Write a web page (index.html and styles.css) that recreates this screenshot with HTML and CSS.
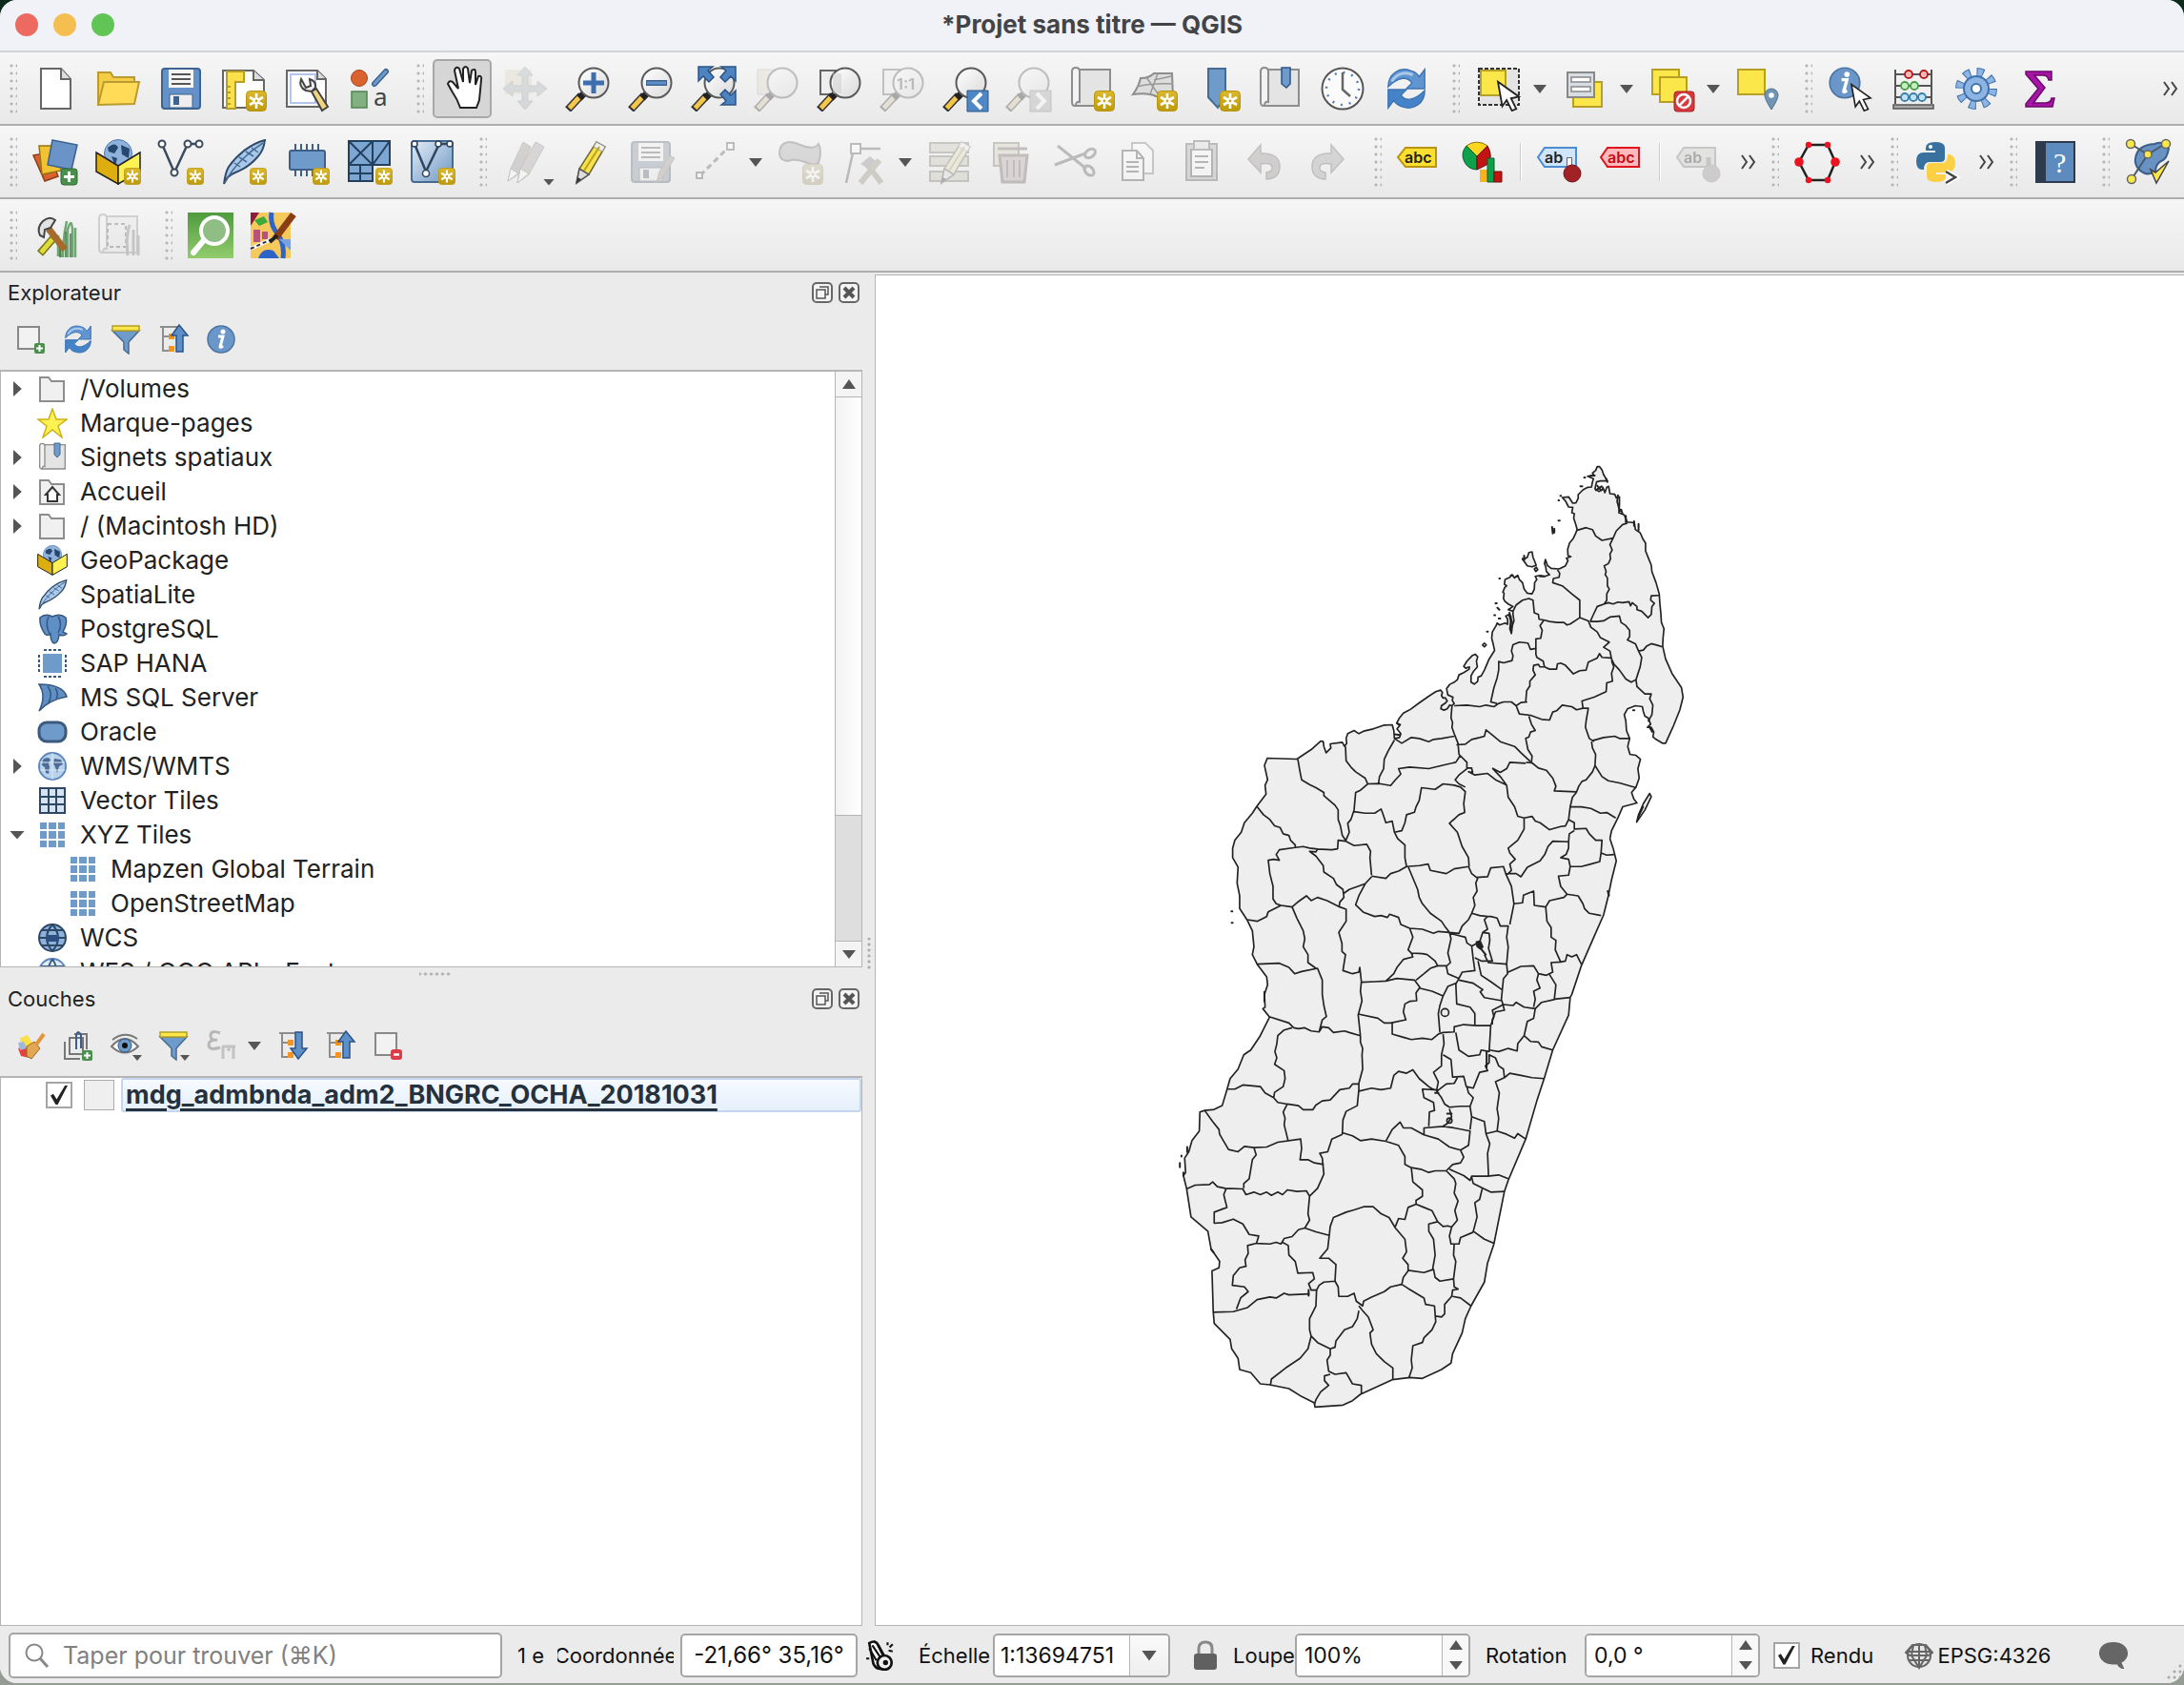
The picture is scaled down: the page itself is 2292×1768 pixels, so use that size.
FILE: index.html
```html
<!DOCTYPE html>
<html lang="fr">
<head>
<meta charset="utf-8">
<title>*Projet sans titre — QGIS</title>
<meta name="viewport" content="width=device-width, initial-scale=1">
<link rel="stylesheet" href="styles.css">
</head>
<body>
<svg class="defs" aria-hidden="true">
  <defs>
    <linearGradient id="gGold" x1="0" y1="0" x2="0" y2="1"><stop offset="0" stop-color="#dcb92c"/><stop offset="1" stop-color="#bd9a0b"/></linearGradient>
    <linearGradient id="gBlue" x1="0" y1="0" x2="1" y2="1"><stop offset="0" stop-color="#e3ecf6"/><stop offset="1" stop-color="#6d97c4"/></linearGradient>
    <linearGradient id="gGreen" x1="0" y1="0" x2="0" y2="1"><stop offset="0" stop-color="#4f9a3f"/><stop offset="1" stop-color="#92cc6c"/></linearGradient>
    <linearGradient id="gGlass" x1="0" y1="0" x2="1" y2="1"><stop offset="0" stop-color="#fff"/><stop offset="1" stop-color="#d9d9d9"/></linearGradient>
  </defs>
  <symbol id="badge" viewBox="0 0 22 22"><rect x=".5" y=".5" width="21" height="21" rx="4" fill="url(#gGold)" stroke="#b8950c"/><path d="M11 3v16M4 7l14 8M18 7L4 15" stroke="#fff" stroke-width="2.600"/><circle cx="11" cy="11" r="3.400" fill="#fff"/><circle cx="11" cy="11" r="1.400" fill="#c9a51a"/></symbol>
  <symbol id="mag" viewBox="0 0 48 48"><path d="M3 46L17 31" stroke="#333" stroke-width="8"/><path d="M4.500 44.500L15 33" stroke="#f4c64a" stroke-width="5"/><path d="M15 34l5-5" stroke="#222" stroke-width="7"/><circle cx="30" cy="18" r="15.500" fill="url(#gGlass)" stroke="#5a5a5a" stroke-width="2"/></symbol>
  <symbol id="refresh" viewBox="0 0 48 48"><path d="M4 22C4 8 16 0 28 4c5 1 8 4 10 7l6-8v21H24l6-6c-4-7-14-8-26 4z" fill="#5f96d2" stroke="#3f74b4" stroke-width="1.500"/><path d="M44 26c0 14-12 22-24 18-5-1-8-4-10-7l-6 8V25h20l-6 6c4 7 14 7 26-5z" fill="#4583c9" stroke="#3f74b4" stroke-width="1.500"/><path d="M8 16C13 7 23 5 31 9" stroke="#a9c8ea" stroke-width="3" fill="none"/></symbol>
  <symbol id="scroll" viewBox="0 0 48 48"><path d="M8 4h36v38H8z" fill="#e4e4e4" stroke="#8d8d8d" stroke-width="2"/><path d="M4 6q0-4 4-4t4 4v32q-4-1-4 4h-1q-3 0-3-4z" fill="#f3f3f3" stroke="#8d8d8d" stroke-width="2"/></symbol>
  <symbol id="funnel" viewBox="0 0 32 32"><path d="M2 7h28L19 19v12l-5-4V19z" fill="#6f9bcb" stroke="#456b93" stroke-width="1.500"/><path d="M2 2h28v5H2z" fill="#fbe74a" stroke="#b79f26" stroke-width="1.500"/></symbol>
  <symbol id="tree" viewBox="0 0 32 32"><path d="M2 3h19M5 3v25h7M5 13h7" stroke="#8d8d8d" stroke-width="2" fill="none"/><rect x="11" y="10" width="6" height="6" fill="#f59321"/><rect x="11" y="23" width="6" height="6" fill="#f59321"/></symbol>
  <symbol id="info" viewBox="0 0 32 32"><circle cx="16" cy="16" r="14" fill="#6a96c9" stroke="#4c74a3" stroke-width="1.500"/><circle cx="18" cy="8" r="2.500" fill="#fff"/><path d="M13 13h5l-3 11q0 1 3-1" stroke="#fff" stroke-width="3" fill="none"/></symbol>
  <symbol id="cursor" viewBox="0 0 28 36"><path d="M2 2l24 17-9 2 6 12-5 2-6-12-5 7z" fill="#fff" stroke="#222" stroke-width="2"/></symbol>
  <symbol id="box" viewBox="0 0 48 48"><circle cx="24" cy="15" r="14.500" fill="#8fb2dc" stroke="#4e7bb0"/><path d="M13 9q8-7 11 0l-4 6-6-2zM27 6l9 4-1 10-7-4zM17 18l6 2-2 8z" fill="#26476f"/><path d="M1 14l23 14v19L1 34z" fill="#dcae10" stroke="#222" stroke-width="1.500"/><path d="M47 14L24 28v19l23-13z" fill="#fdf253" stroke="#222" stroke-width="1.500"/></symbol>
  <symbol id="feather" viewBox="0 0 48 48"><path d="M3 47c1-8 2-13 5-18C17 16 31 5 46 1c-1 8-4 14-8 18-7 8-15 13-23 16-5 2-10 5-12 12z" fill="#a9c8ea" stroke="#2f4a6b" stroke-width="2"/><path d="M4 46C13 28 27 15 44 4M14 25l6 4M19 19l8 5M26 13l8 5M32 9l7 5" fill="none" stroke="#456b93" stroke-width="1.500"/></symbol>
  <symbol id="folder" viewBox="0 0 32 32"><path d="M3 4h9l3 4h13v21H3z" fill="#f0f0f0" stroke="#8d8d8d" stroke-width="2"/></symbol>
  <symbol id="tiles" viewBox="0 0 32 32"><path d="M3 3h7v7H3zM12 3h8v7h-8zM22 3h7v7h-7zM3 12h7v8H3zM12 12h8v8h-8zM22 12h7v8h-7zM3 22h7v7H3zM12 22h8v7h-8zM22 22h7v7h-7z" fill="#6f9bcb"/></symbol>
  <symbol id="globe" viewBox="0 0 32 32"><circle cx="16" cy="16" r="14" fill="#b9d2ec" stroke="#5b87bb" stroke-width="2"/><path d="M6 9q5-4 8 0l-2 4 1 4-1 7-3-1-1-6-3-2zM18 8l7 1 2 5-4 2-2 7-2-6-2-4z" fill="#4c6c96"/><path d="M3 12h26M3 20h26M16 2v28" stroke="#dbe8f5" fill="none"/></symbol>
  <symbol id="float" viewBox="0 0 22 22"><rect x="1" y="1" width="20" height="20" rx="4" fill="#f4f4f4" stroke="#666" stroke-width="2"/><path d="M8 5h9v8h-3M5 8h9v9H5z" fill="none" stroke="#555" stroke-width="1.500"/></symbol>
  <symbol id="close" viewBox="0 0 22 22"><rect x="1" y="1" width="20" height="20" rx="4" fill="#f4f4f4" stroke="#666" stroke-width="2"/><path d="M6 6l10 10M16 6L6 16" stroke="#555" stroke-width="4"/></symbol>
  <symbol id="pencil" viewBox="0 0 48 48"><path d="M12 46l3-15L33 3l9 5-17 29z" fill="#f7e14c" stroke="#6f6836" stroke-width="1.500"/><path d="M33 3l9 5-3 5-9-5z" fill="#eee" stroke="#999"/><path d="M20 33L36 8" stroke="#b9a21f" stroke-width="2"/><path d="M12 46l3-15 10 6z" fill="#ddd" stroke="#555" stroke-width="1.500"/><path d="M12 46l1-6 4 2z" fill="#333"/></symbol>
  <symbol id="floppy" viewBox="0 0 48 48"><rect x="4" y="3" width="40" height="42" rx="3" fill="#6492c8" stroke="#3d6390" stroke-width="2"/><path d="M11 4h26v19H11z" fill="#f5f5f5"/><path d="M14 9h20M14 14h20M14 19h20" stroke="#555" stroke-width="2"/><path d="M12 30h24v14H12z" fill="#eee" stroke="#3d6390"/><path d="M16 32h6v9h-6z" fill="#3d6390"/></symbol>
  <symbol id="down" viewBox="0 0 16 12"><path d="M1 2h14l-7 9z" fill="#555"/></symbol>
  <symbol id="more" viewBox="0 0 18 18"><path d="M2 2l5 7-5 7M10 2l5 7-5 7" fill="none" stroke="#444" stroke-width="2"/></symbol>
</svg>

<div class="window">
  <header class="titlebar">
    <div class="lights"><button class="light red" aria-label="Fermer"></button><button class="light amber" aria-label="Réduire"></button><button class="light green" aria-label="Agrandir"></button></div>
    <h1>*Projet sans titre — QGIS</h1>
  </header>

  <nav class="toolbar" aria-label="Projet et navigation">
    <div class="group"><i class="grip"></i>
      <button aria-label="Nouveau"><svg viewBox="0 0 48 48"><path d="M9 3h21l10 11v31H9z" fill="#fff" stroke="#666" stroke-width="2"/><path d="M30 3v11h10" fill="#ddd" stroke="#666" stroke-width="2"/></svg></button>
      <button aria-label="Ouvrir"><svg viewBox="0 0 48 48"><path d="M3 41V7h13l3 5h22v8" fill="#f4cd45" stroke="#b99b31" stroke-width="2"/><path d="M3 41L9 17h37l-5 23z" fill="#ffdb57" stroke="#b99b31" stroke-width="2"/></svg></button>
      <button aria-label="Enregistrer"><svg><use href="#floppy"/></svg></button>
      <button aria-label="Nouvelle mise en page"><svg viewBox="0 0 48 48"><path d="M2 5h32l11 10v29H2z" fill="#fff" stroke="#666" stroke-width="2"/><path d="M34 5v10h11" fill="#ddd" stroke="#666" stroke-width="2"/><path d="M6 6h18v11h-9v28H6z" fill="#fbe04c" stroke="#b79f26" stroke-width="2"/><path d="M6 22h4M6 28h4M6 34h4M6 40h4" stroke="#b79f26" stroke-width="2"/><use href="#badge" x="26" y="26" width="22" height="22"/></svg></button>
      <button aria-label="Gestionnaire de mises en page"><svg viewBox="0 0 48 48"><path d="M3 5h32l9 9v29H3z" fill="#fff" stroke="#666" stroke-width="2"/><path d="M35 5v9h9" fill="#ddd" stroke="#666" stroke-width="2"/><path d="M7 9h26v30H7z" fill="none" stroke="#b5c4ea" stroke-width="2"/><path d="M18 14q-3 8 5 12l6 1 4-4q1-7-6-9l1 7-5 2z" fill="#eee" stroke="#444" stroke-width="2"/><path d="M29 27l5-3 12 19-6 4z" fill="#f1d680" stroke="#444" stroke-width="2"/></svg></button>
      <button aria-label="Gestionnaire de styles"><svg viewBox="0 0 48 48"><circle cx="13" cy="13" r="8.500" fill="#d9622e" stroke="#a4471d"/><path d="M29 19L41 6" stroke="#3d6390" stroke-width="6" stroke-linecap="round"/><path d="M29 19L41 6" stroke="#6f9bcb" stroke-width="3" stroke-linecap="round"/><path d="M5 27h16v17H5z" fill="#83b083" stroke="#4f8450" stroke-width="1.500"/><text x="28" y="42" class="glyph">a</text></svg></button>
    </div>
    <div class="group"><i class="grip"></i>
      <button class="on" aria-label="Se déplacer"><svg viewBox="0 0 48 48"><path d="M20 45q-3-9-8-16l-5-9q1-4 5-2l6 7-4-19q1-5 5-2l4 14V4q3-4 5 0l2 15 2-13q4-3 4 2v13l3-9q4-1 3 4l-2 21-3 8z" fill="#fff" stroke="#222" stroke-width="2" transform="translate(2 -1)"/></svg></button>
      <button class="off" aria-label="Vers la sélection"><svg viewBox="0 0 48 48"><path d="M3 4h28v26H3z" fill="#ead98c"/><path d="M24 1l8 9h-5v11h10v-5l10 8-10 8v-5H27v10h5l-8 9-8-9h5V27H11v5L1 24l10-8v5h10V10h-5z" fill="#9fb1c4" stroke="#8494a5"/></svg></button>
      <button aria-label="Zoom avant"><svg viewBox="0 0 48 48"><use href="#mag"/><path d="M30 7v22M19 18h22" stroke="#3d6fb0" stroke-width="5"/></svg></button>
      <button aria-label="Zoom arrière"><svg viewBox="0 0 48 48"><use href="#mag"/><path d="M19 18h22" stroke="#3d6390" stroke-width="6"/><path d="M20 18h20" stroke="#5d8fca" stroke-width="3"/></svg></button>
      <button aria-label="Zoom sur l'emprise totale"><svg viewBox="0 0 48 48"><use href="#mag"/><path d="M8 1h15l-5 4 6 7-5 5-6-6-5 5zM47 1H32l5 4-6 7 5 5 6-6 5 5zM47 41H32l5-4-6-7 5-5 6 6 5-5z" fill="#4d83c1" stroke="#2c5484" stroke-width="1.500"/></svg></button>
      <button class="off" aria-label="Zoom sur la sélection"><svg viewBox="0 0 48 48"><path d="M4 4h22v26H4z" fill="#e8dc98" stroke="#aaa"/><use href="#mag"/></svg></button>
      <button aria-label="Zoom sur la couche"><svg viewBox="0 0 48 48"><path d="M4 5h22v25H4z" fill="#eee" stroke="#666" stroke-width="2"/><use href="#mag"/><path d="M17 8h9v21h-9z" fill="#ccc" opacity=".5"/></svg></button>
      <button class="off" aria-label="Zoom à la résolution native"><svg viewBox="0 0 48 48"><path d="M4 4h22v26H4z" fill="#eee" stroke="#666" stroke-width="2"/><use href="#mag"/><text x="18" y="25" class="ratio">1:1</text></svg></button>
      <button aria-label="Zoom précédent"><svg viewBox="0 0 48 48"><use href="#mag"/><path d="M26 26h22v22H26z" fill="#4f86c6" stroke="#2c5484"/><path d="M41 29l-8 8 8 8" fill="none" stroke="#fff" stroke-width="4"/></svg></button>
      <button class="off" aria-label="Zoom suivant"><svg viewBox="0 0 48 48"><use href="#mag"/><path d="M26 26h22v22H26z" fill="#aaa" stroke="#777"/><path d="M33 29l8 8-8 8" fill="none" stroke="#fff" stroke-width="4"/></svg></button>
      <button aria-label="Nouvelle vue cartographique"><svg viewBox="0 0 48 48"><use href="#scroll"/><use href="#badge" x="27" y="26" width="22" height="22"/></svg></button>
      <button aria-label="Nouvelle vue 3D"><svg viewBox="0 0 48 48"><path d="M10 13q9 0 14-5h19l1 26-18-2q-8-4-24-2 6-8 8-17z" fill="#ddd" stroke="#8d8d8d" stroke-width="2"/><path d="M6 22q16-4 38-3M16 12l14 20M28 8l-8 22M24 15l18-4" fill="none" stroke="#999" stroke-width="1.500"/><use href="#badge" x="27" y="26" width="22" height="22"/></svg></button>
      <button aria-label="Nouveau signet spatial"><svg viewBox="0 0 48 48"><path d="M15 3h18v30l-8 11-10-11z" fill="#6f9bcb" stroke="#456b93" stroke-width="2"/><use href="#badge" x="27" y="26" width="22" height="22"/></svg></button>
      <button aria-label="Signets spatiaux"><svg viewBox="0 0 48 48"><use href="#scroll"/><path d="M26 2h9v17l-4 4-5-4z" fill="#6f9bcb" stroke="#2c5484" stroke-width="1.500"/></svg></button>
      <button aria-label="Contrôleur temporel"><svg viewBox="0 0 48 48"><circle cx="24" cy="24" r="21.500" fill="#fbfbfb" stroke="#555" stroke-width="2"/><circle cx="24" cy="24" r="17" fill="none" stroke="#4f7fb8" stroke-width="2.500" stroke-dasharray="2 6.900"/><path d="M24 7v18l8 7" fill="none" stroke="#666" stroke-width="2.500"/></svg></button>
      <button aria-label="Actualiser"><svg viewBox="0 0 48 48"><use href="#refresh" x="2" y="1" width="46" height="46"/></svg></button>
    </div>
    <div class="group"><i class="grip"></i>
      <button aria-label="Sélectionner"><svg viewBox="0 0 48 48"><path d="M4 3h42v38H4z" fill="#e4e4e4" stroke="#333" stroke-width="2" stroke-dasharray="4 2"/><path d="M6 5h26v26H6z" fill="#fbe74a" stroke="#b79f26" stroke-width="2"/><use href="#cursor" x="20" y="15" width="30" height="33"/></svg></button><button class="drop" aria-label="Options de sélection"><svg><use href="#down"/></svg></button>
      <button aria-label="Sélection par valeur"><svg viewBox="0 0 48 48"><path d="M12 17h30v26H12z" fill="#fbe74a" stroke="#b79f26" stroke-width="2"/><path d="M6 7h28v26H6z" fill="#d8dde3" stroke="#888" stroke-width="2"/><path d="M10 12h20v5H10zM10 22h20v5H10z" fill="#fff" stroke="#888" stroke-width="1.500"/></svg></button><button class="drop" aria-label="Options de valeur"><svg><use href="#down"/></svg></button>
      <button aria-label="Désélectionner"><svg viewBox="0 0 48 48"><path d="M4 4h28v26H4z" fill="#fbe74a" stroke="#b79f26" stroke-width="2"/><path d="M12 12h28v26H12z" fill="#fbe74a" stroke="#b79f26" stroke-width="2"/><rect x="27" y="27" width="21" height="21" rx="3" fill="#d8383c" stroke="#a32226"/><circle cx="37" cy="37" r="7" fill="none" stroke="#fff" stroke-width="2.500"/><path d="M32 42l10-10" stroke="#fff" stroke-width="2.500"/></svg></button><button class="drop" aria-label="Options de désélection"><svg><use href="#down"/></svg></button>
      <button aria-label="Sélection par localisation"><svg viewBox="0 0 48 48"><path d="M3 4h28v26H3z" fill="#fbe74a" stroke="#b79f26" stroke-width="2"/><path d="M38 46q-7-11-7-15a7 7 0 0 1 14 0q0 4-7 15z" fill="#7096b4" stroke="#4c6f8c"/><circle cx="38" cy="31" r="2.800" fill="#fff"/></svg></button>
    </div>
    <div class="group"><i class="grip"></i>
      <button aria-label="Identifier"><svg viewBox="0 0 48 48"><use href="#info" x="0" y="0" width="36" height="36"/><use href="#cursor" x="22" y="18" width="26" height="30"/></svg></button>
      <button aria-label="Calculatrice de champs"><svg viewBox="0 0 48 48"><path d="M5 4v36M43 4v36M5 9h38M5 21h38M5 33h38" stroke="#555" stroke-width="2"/><g stroke-width="1.800"><g fill="#f6b8b8" stroke="#b31b1b"><circle cx="19" cy="9" r="4"/><circle cx="35" cy="9" r="4"/></g><g fill="#c3f0c0" stroke="#4b9d48"><circle cx="15" cy="21" r="4"/><circle cx="25" cy="21" r="4"/></g><g fill="#bfe2f6" stroke="#3c7fa8"><circle cx="15" cy="33" r="4"/><circle cx="24" cy="33" r="4"/><circle cx="33" cy="33" r="4"/></g></g><path d="M3 41h42v4H3z" fill="#aaa" stroke="#555" stroke-width="1.500"/></svg></button>
      <button aria-label="Boîte à outils"><svg viewBox="0 0 48 48"><circle cx="24" cy="24" r="17" fill="none" stroke="#3f72ad" stroke-width="10" stroke-dasharray="7 6.350"/><circle cx="24" cy="24" r="17" fill="none" stroke="#8db4e2" stroke-width="8" stroke-dasharray="5 8.350" stroke-dashoffset="-1"/><circle cx="24" cy="24" r="13" fill="#8db4e2" stroke="#3f72ad" stroke-width="2"/><circle cx="24" cy="24" r="5" fill="#fff" stroke="#3f72ad" stroke-width="2"/></svg></button>
      <button aria-label="Résumé statistique"><svg viewBox="0 0 48 48"><path d="M10 6h27v9h-3q-1-5-6-5H19l11 13-12 16h13q5 0 6-5h3l-2 9H10v-3l13-16L10 9z" fill="#a813a8" stroke="#6b0b6b" stroke-width="1.500"/></svg></button>
    </div>
    <button class="chev end" aria-label="Plus d'outils"><svg><use href="#more"/></svg></button>
  </nav>

  <nav class="toolbar" aria-label="Couches et édition">
    <div class="group"><i class="grip"></i>
      <button aria-label="Gestionnaire des sources de données"><svg viewBox="0 0 48 48"><path d="M1 17l16-3 10 25-14 5z" fill="#d9622e" stroke="#8e3c17" stroke-width="1.500"/><path d="M7 7h20l3 26-20 4z" fill="#f1c232" stroke="#957514" stroke-width="1.500"/><path d="M21 1l26 5-6 26-25-5z" fill="#6a94c8" stroke="#3c618f" stroke-width="1.500"/><rect x="30" y="31" width="17" height="17" rx="3" fill="#4b8f4f" stroke="#2f6a33"/><path d="M38.500 34v11M33 39.500h11" stroke="#fff" stroke-width="3"/></svg></button>
      <button aria-label="Nouvelle couche GeoPackage"><svg viewBox="0 0 48 48"><use href="#box"/><use href="#badge" x="30" y="30" width="18" height="18"/></svg></button>
      <button aria-label="Nouvelle couche Shapefile"><svg viewBox="0 0 48 48"><path d="M4 5l13 30L31 5h12" fill="none" stroke="#3a4b5e" stroke-width="2.500"/><g fill="#fff" stroke="#3a4b5e" stroke-width="2"><circle cx="4" cy="5" r="3.500"/><circle cx="31" cy="5" r="3.500"/><circle cx="43" cy="5" r="3.500"/><circle cx="17" cy="35" r="3.500"/></g><use href="#badge" x="30" y="30" width="18" height="18"/></svg></button>
      <button aria-label="Nouvelle couche SpatiaLite"><svg viewBox="0 0 48 48"><use href="#feather"/><use href="#badge" x="30" y="30" width="18" height="18"/></svg></button>
      <button aria-label="Nouvelle couche temporaire"><svg viewBox="0 0 48 48"><path d="M12 5v34M18 5v34M24 5v34M30 5v34M36 5v34" stroke="#3d5f89" stroke-width="2"/><rect x="6" y="12" width="37" height="20" rx="2" fill="#6f9bcb" stroke="#3d5f89" stroke-width="2"/><use href="#badge" x="30" y="30" width="18" height="18"/></svg></button>
      <button aria-label="Nouvelle couche maillage"><svg viewBox="0 0 48 48"><path d="M2 2h43v25H27v17H2z" fill="#7ea6d3" stroke="#22405f" stroke-width="2"/><path d="M2 27h25V2M2 2l25 25L45 2M2 27L27 2M14 27v17M2 36h25" fill="none" stroke="#22405f" stroke-width="2"/><use href="#badge" x="30" y="30" width="18" height="18"/></svg></button>
      <button aria-label="Nouvelle couche virtuelle"><svg viewBox="0 0 48 48"><rect x="2" y="2" width="43" height="43" rx="3" fill="url(#gBlue)" stroke="#456b93" stroke-width="2"/><path d="M5 5l12 29L31 5h11" fill="none" stroke="#2f4560" stroke-width="2.500"/><g fill="#fff" stroke="#2f4560" stroke-width="1.500"><circle cx="5" cy="5" r="3"/><circle cx="30" cy="5" r="3"/><circle cx="42" cy="5" r="3"/><circle cx="17" cy="36" r="3.500"/></g><use href="#badge" x="30" y="30" width="18" height="18"/></svg></button>
    </div>
    <div class="group"><i class="grip"></i>
      <button class="off" aria-label="Modifications en cours"><svg viewBox="0 0 48 48"><path d="M6 44l3-13L22 3l8 5-13 29z" fill="#a88e8e" stroke="#776"/><path d="M16 46l3-15L35 3l9 5-16 29z" fill="#b5a09c" stroke="#776"/><path d="M6 44l3-13 8 5zM16 46l3-15 9 5z" fill="#fff" stroke="#777"/></svg><i class="corner"></i></button>
      <button aria-label="Basculer en mode édition"><svg><use href="#pencil"/></svg></button>
      <button class="off" aria-label="Enregistrer les modifications"><svg viewBox="0 0 48 48"><use href="#floppy"/><path d="M30 46l3-12 11-17 5 3-12 19z" fill="#bc8c80" stroke="#876"/></svg></button>
      <button class="off" aria-label="Ajouter une entité"><svg viewBox="0 0 48 48"><path d="M10 38L38 10" stroke="#555" stroke-width="3" stroke-dasharray="6 4"/><path d="M6 35h6v6H6zM38 4h7v7h-7z" fill="#fff" stroke="#555" stroke-width="2"/></svg></button><button class="drop" aria-label="Options de numérisation"><svg><use href="#down"/></svg></button>
      <button class="off" aria-label="Ajouter un polygone"><svg viewBox="0 0 48 48"><path d="M3 9Q8-1 24 6q14 6 19-1 4 8 0 20-6 3-14-1-12-4-18-1Q-1 22 3 9z" fill="#aaa" stroke="#666" stroke-width="2"/><use href="#badge" x="26" y="26" width="22" height="22"/></svg></button>
      <button class="off" aria-label="Outil de nœud"><svg viewBox="0 0 48 48"><path d="M6 46l8-36h28" fill="none" stroke="#555" stroke-width="2.500"/><path d="M11 5h10v10H11z" fill="#fff" stroke="#555" stroke-width="2"/><path d="M21 46l20-24M26 24l17 22" stroke="#a58f55" stroke-width="6"/><path d="M21 26l10-8 6 5-8 8z" fill="#888"/></svg></button><button class="drop" aria-label="Options de nœud"><svg><use href="#down"/></svg></button>
      <button class="off" aria-label="Modifier les attributs"><svg viewBox="0 0 48 48"><path d="M3 4h40v10H3zM3 18h40v10H3zM3 34h40v10H3z" fill="#ccc48b" stroke="#77754e" stroke-width="2"/><use href="#pencil" x="3"/></svg></button>
      <button class="off" aria-label="Supprimer"><svg viewBox="0 0 48 48"><path d="M4 4h26v24H4z" fill="#d8d08b" stroke="#77754e" stroke-width="2"/><path d="M8 10h31M10 17h29l-3 28H13z" fill="#d59a9d" stroke="#8c5356" stroke-width="3"/><path d="M18 22v18M25 22v18M31 22v18" stroke="#8c5356" stroke-width="2"/></svg></button>
      <button class="off" aria-label="Couper"><svg viewBox="0 0 48 48"><path d="M5 7l30 24M2 27L34 15" stroke="#555" stroke-width="3"/><ellipse cx="39" cy="15" rx="6" ry="4" transform="rotate(-35 39 15)" fill="none" stroke="#555" stroke-width="3"/><ellipse cx="38" cy="33" rx="6" ry="4" transform="rotate(45 38 33)" fill="none" stroke="#555" stroke-width="3"/></svg></button>
      <button class="off" aria-label="Copier"><svg viewBox="0 0 48 48"><path d="M17 4h14l8 8v24H17z" fill="#fff" stroke="#777" stroke-width="2"/><path d="M7 12h15l7 8v23H7z" fill="#fff" stroke="#444" stroke-width="2"/><path d="M22 12v8h7M11 24h13M11 29h13M11 34h13" fill="none" stroke="#444" stroke-width="2"/></svg></button>
      <button class="off" aria-label="Coller"><svg viewBox="0 0 48 48"><path d="M8 5h32v38H8z" fill="#aaa" stroke="#555" stroke-width="2"/><path d="M13 11h22v28H13z" fill="#fff" stroke="#444" stroke-width="2"/><path d="M16 2h16v9H16z" fill="#ddd" stroke="#555" stroke-width="2"/><path d="M17 18h14M17 24h14M17 30h10" stroke="#444" stroke-width="2"/></svg></button>
      <button class="off" aria-label="Annuler"><svg viewBox="0 0 48 48"><path d="M7 21L20 6v9c14-1 20 5 20 14 0 8-5 13-14 13v-7q7-1 6-6t-12-3v9z" fill="#a18f86" stroke="#666" stroke-width="1.500"/></svg></button>
      <button class="off" aria-label="Rétablir"><svg viewBox="0 0 48 48"><path d="M41 21L28 6v9C14 14 8 20 8 29c0 8 5 13 14 13v-7q-7-1-6-6t12-3v9z" fill="#9fa19b" stroke="#666" stroke-width="1.500"/></svg></button>
    </div>
    <div class="group"><i class="grip"></i>
      <button aria-label="Étiquetage"><svg viewBox="0 0 48 48"><path d="M9 9h32v20H9L1 19z" fill="#fcdf2f" stroke="#b8950c" stroke-width="2"/><text x="8" y="25" class="tag">abc</text></svg></button>
      <button aria-label="Diagrammes"><svg viewBox="0 0 48 48"><path d="M18 18L7 7a16 14 0 0 1 22 0z" fill="#ffd51f" stroke="#8a7410"/><path d="M18 18v14A15 15 0 0 1 7 7z" fill="#0ea04b" stroke="#0c5c2e"/><path d="M18 18L29 7q7 12-1 20l-10 5z" fill="#c31414" stroke="#700c0c"/><path d="M21 32h8v13h-8z" fill="#f9b31d"/><path d="M29 20h7v25h-7z" fill="#0ea04b" stroke="#0c5c2e"/><path d="M36 34h8v11h-8z" fill="#c31414" stroke="#700c0c"/></svg></button>
      <i class="sep"></i>
      <button aria-label="Épingler les étiquettes"><svg viewBox="0 0 48 48"><path d="M9 9h33v20H9L2 19z" fill="#cfe5fb" stroke="#4c8cd0" stroke-width="2"/><text x="9" y="25" class="tag">ab</text><path d="M35 19v14" stroke="#666" stroke-width="6"/><path d="M35 20v14" stroke="#fff" stroke-width="4"/><circle cx="38" cy="36" r="9" fill="#a02226" stroke="#701417"/></svg></button>
      <button aria-label="Afficher les étiquettes"><svg viewBox="0 0 48 48"><path d="M9 9h33v20H9L2 19z" fill="#ffb9bd" stroke="#e0131c" stroke-width="2"/><text x="9" y="25" class="tag red-tag">abc</text></svg></button>
      <i class="sep"></i>
      <button class="off" aria-label="Déplacer une étiquette"><svg viewBox="0 0 48 48"><path d="M9 9h33v20H9L2 19z" fill="#ccc9b5" stroke="#777" stroke-width="2"/><text x="9" y="25" class="tag">ab</text><path d="M35 19v14" stroke="#777" stroke-width="5"/><circle cx="38" cy="36" r="9" fill="#a08788" stroke="#877"/></svg></button>
      <button class="chev" aria-label="Plus d'étiquettes"><svg><use href="#more"/></svg></button>
    </div>
    <div class="group tight"><i class="grip"></i>
      <button aria-label="Forme"><svg viewBox="0 0 48 48"><path d="M15 6h20l8 18-8 19H15L5 24z" fill="none" stroke="#222" stroke-width="2.500"/><g fill="#ec1320"><circle cx="15" cy="6" r="3.200"/><circle cx="35" cy="6" r="3.200"/><circle cx="43" cy="24" r="4.800"/><circle cx="35" cy="43" r="3.200"/><circle cx="15" cy="43" r="3.200"/><circle cx="5" cy="24" r="4.800"/></g></svg></button>
      <button class="chev" aria-label="Plus de formes"><svg><use href="#more"/></svg></button>
    </div>
    <div class="group tight"><i class="grip"></i>
      <button aria-label="Console Python"><svg viewBox="0 0 48 48"><path d="M23 3q10 0 10 6v11q0 4-5 4H17q-6 0-6 8-8 1-8-9 0-9 8-9h12v-2H13V9q0-6 10-6z" fill="#38719f"/><path d="M24 45q-10 0-10-6V29q0-4 5-4h11q6 0 6-9 8 0 8 9t-8 10H24v2h10v3q0 5-10 5z" fill="#fdcf45"/><circle cx="18" cy="8" r="2" fill="#fff"/><path d="M34 34l10 6-10 6" fill="none" stroke="#fff" stroke-width="6"/><path d="M34 34l10 6-10 6" fill="none" stroke="#444" stroke-width="2.500"/></svg></button>
      <button class="chev" aria-label="Plus d'extensions"><svg><use href="#more"/></svg></button>
    </div>
    <div class="group tight"><i class="grip"></i>
      <button aria-label="Aide"><svg viewBox="0 0 48 48"><path d="M4 3h40v42H4z" fill="#5d8abf" stroke="#2d3b4c" stroke-width="2"/><path d="M4 3h10v42H4z" fill="#2d3b4c"/><text x="22" y="35" class="help">?</text></svg></button>
    </div>
    <div class="group"><i class="grip"></i>
      <button aria-label="Vérificateur de topologie"><svg viewBox="0 0 48 48"><path d="M11 20q2-14 20-15 12-4 15 5-2 10-6 12-8 3-8 12-10 6-18-3-4-5-3-11z" fill="#6792c2" stroke="#3c5f8a" stroke-width="2"/><path d="M6 5l18 11L42 5M24 16L7 42" fill="none" stroke="#4a5a6c" stroke-width="2"/><g fill="#fbe74a" stroke="#666" stroke-width="1.500"><circle cx="6" cy="5" r="4.500"/><circle cx="43" cy="5" r="4.500"/><circle cx="24" cy="16" r="4"/><circle cx="7" cy="42" r="4.500"/></g><path d="M27 32l5 3 14-12-13 23z" fill="#fbe74a" stroke="#444" stroke-width="1.500"/></svg></button>
    </div>
  </nav>

  <nav class="toolbar" aria-label="Extensions">
    <div class="group"><i class="grip"></i>
      <button aria-label="Outil GRASS"><svg viewBox="0 0 48 48"><path d="M27 46V24M32 47q0-20 4-38M37 47V18q4-14 5 0v29M30 47q-2-18-5-20M45 47V16" fill="none" stroke="#6fa673" stroke-width="2.500"/><path d="M29 47V30M35 47V20M40 47V22" fill="none" stroke="#3e7a43" stroke-width="1.500"/><path d="M8 43l14-16" stroke="#75701c" stroke-width="8"/><path d="M9 42l12-14" stroke="#dfdc35" stroke-width="5"/><path d="M17 17l17 22" stroke="#a56a2c" stroke-width="7"/><path d="M8 24q-4-8 3-15 7-6 13-1l-5 8-6 2-1 8z" fill="#e2e2e2" stroke="#444" stroke-width="2"/></svg></button>
      <button class="off" aria-label="Région GRASS"><svg viewBox="0 0 48 48"><use href="#scroll"/><path d="M13 12h19v24H13z" fill="none" stroke="#555" stroke-width="2" stroke-dasharray="4 3"/><path d="M34 45q-2-20 2-32M40 45V18M45 45V24" stroke="#777" stroke-width="3" fill="none"/></svg></button>
    </div>
    <div class="group"><i class="grip"></i>
      <button aria-label="QuickMapServices"><svg viewBox="0 0 48 48"><path d="M0 0h48v48H0z" fill="url(#gGreen)"/><path d="M6 42l11-13" stroke="#fff" stroke-width="6" stroke-linecap="round"/><circle cx="28" cy="19" r="14" fill="#8fbd84" stroke="#fff" stroke-width="4"/></svg></button>
      <button aria-label="OpenStreetMap"><svg viewBox="0 0 48 48"><path d="M0 0h42v48H0z" fill="#f6c95c"/><path d="M0 0h9L0 14z" fill="#8c1c3a"/><path d="M4 8l10-4 4 6-9 4z" fill="#3cab3a"/><path d="M3 18h7v13H3zM12 20h6v8h-6z" fill="#b9527a"/><path d="M22 0q-2 12 6 22t6 26" fill="none" stroke="#2c64c8" stroke-width="5"/><path d="M8 48q4-12 16-8l6 8z" fill="#2c64c8"/><path d="M30 28h12v12z" fill="#7ba0df"/><path d="M0 38l22-10" stroke="#fff" stroke-width="4"/><path d="M0 38l22-10" stroke="#333" stroke-width="2" stroke-dasharray="4 3"/><path d="M26 27L45 2" stroke="#8a3d12" stroke-width="7"/><path d="M20 31l8-7" stroke="#222" stroke-width="4"/></svg></button>
    </div>
  </nav>

  <main class="work">
    <div class="side">
      <section class="dock explorer" aria-label="Explorateur">
        <header class="dock-head"><h2>Explorateur</h2><button aria-label="Détacher"><svg><use href="#float"/></svg></button><button aria-label="Fermer le panneau"><svg><use href="#close"/></svg></button></header>
        <div class="dock-tools">
          <button aria-label="Ajouter les couches"><svg viewBox="0 0 32 32"><path d="M3 3h22v23H3z" fill="#f2f2f2" stroke="#888" stroke-width="2"/><rect x="20" y="20" width="11" height="11" rx="2" fill="#4b8f4f"/><path d="M25.500 22v7M22 25.500h7" stroke="#fff" stroke-width="2"/></svg></button>
          <button aria-label="Rafraîchir"><svg><use href="#refresh"/></svg></button>
          <button aria-label="Filtrer"><svg><use href="#funnel"/></svg></button>
          <button aria-label="Tout replier"><svg viewBox="0 0 32 32"><use href="#tree"/><path d="M22 1l9 11h-5v17h-7V12h-5z" fill="#5d8fca" stroke="#2c5484" stroke-width="1.500"/></svg></button>
          <button aria-label="Propriétés"><svg><use href="#info"/></svg></button>
        </div>
        <div class="tree-frame">
          <ul class="tree">
            <li class="shut"><svg><use href="#folder"/></svg>/Volumes</li>
            <li><svg viewBox="0 0 32 32"><path d="M16 1l4 11h11l-9 7 4 12-10-8-10 8 4-12-9-7h11z" fill="#fdf253" stroke="#d0b018" stroke-width="1.500"/></svg>Marque-pages</li>
            <li class="shut"><svg viewBox="0 0 32 32"><use href="#scroll"/><path d="M18 1h6v12l-3 3-3-3z" fill="#6f9bcb" stroke="#456b93"/></svg>Signets spatiaux</li>
            <li class="shut"><svg viewBox="0 0 32 32"><use href="#folder"/><path d="M9 19l7-8 7 8h-2v7H11v-7z" fill="#fff" stroke="#333" stroke-width="2"/></svg>Accueil</li>
            <li class="shut"><svg><use href="#folder"/></svg>/ (Macintosh HD)</li>
            <li><svg><use href="#box"/></svg>GeoPackage</li>
            <li><svg><use href="#feather"/></svg>SpatiaLite</li>
            <li><svg viewBox="0 0 32 32"><path d="M3 4q6-5 13-1 8-4 14 1 2 6-3 15l4 2q-3 3-8 1-1 9-5 9-4-1-4-10-3 3-6 0Q2 12 3 4z" fill="#5f8fc4" stroke="#35587f" stroke-width="1.500"/><path d="M12 3q-4 8 1 18M22 3q5 8 0 17" fill="none" stroke="#35587f" stroke-width="1.500"/></svg>PostgreSQL</li>
            <li><svg viewBox="0 0 32 32"><path d="M6 6h20v20H6z" fill="#6f9bcb"/><path d="M7 2h20M7 30h20M2 7v20M30 7v20" stroke="#35587f" stroke-width="2" stroke-dasharray="3 2"/></svg>SAP HANA</li>
            <li><svg viewBox="0 0 32 32"><path d="M2 2q25 0 29 13-18 3-29 15Q10 14 2 2z" fill="#5f8fc4" stroke="#35587f" stroke-width="1.500"/><path d="M11 4q6 8 1 17M19 6q4 6 1 11" fill="none" stroke="#35587f" stroke-width="1.500"/></svg>MS SQL Server</li>
            <li><svg viewBox="0 0 32 32"><rect x="2" y="6" width="28" height="20" rx="8" fill="#6f9bcb" stroke="#3c5a7d" stroke-width="3"/></svg>Oracle</li>
            <li class="shut"><svg><use href="#globe"/></svg>WMS/WMTS</li>
            <li><svg viewBox="0 0 32 32"><path d="M3 3h26v26H3zM12 3v26M20 3v26M3 12h26M3 20h26" fill="#d6e3f2" stroke="#2c4866" stroke-width="2"/></svg>Vector Tiles</li>
            <li class="open"><svg><use href="#tiles"/></svg>XYZ Tiles</li>
            <li class="child"><svg><use href="#tiles"/></svg>Mapzen Global Terrain</li>
            <li class="child"><svg><use href="#tiles"/></svg>OpenStreetMap</li>
            <li><svg viewBox="0 0 32 32"><circle cx="16" cy="16" r="14" fill="#8fb2dc" stroke="#2c4866" stroke-width="2"/><path d="M2 16h28M5 8h22M5 24h22M16 2q-12 14 0 28M16 2q12 14 0 28" fill="none" stroke="#2c4866" stroke-width="2"/><path d="M10 13h12v7H10z" fill="#2c5080"/></svg>WCS</li>
            <li><svg viewBox="0 0 32 32"><circle cx="16" cy="16" r="14" fill="#e4eef8" stroke="#5b87bb" stroke-width="2"/><path d="M4 10h24M16 2q-9 14 0 28M16 2q9 14 0 28" fill="none" stroke="#3c5e8a" stroke-width="2"/></svg>WFS / OGC API - Features</li>
          </ul>
          <div class="scroll"><button aria-label="Monter"><svg viewBox="0 0 16 12"><path d="M1 11h14L8 1z" fill="#555"/></svg></button><div class="track"><div class="thumb"></div></div><button aria-label="Descendre"><svg><use href="#down"/></svg></button></div>
        </div>
      </section>
      <div class="splitter"></div>
      <section class="dock layers" aria-label="Couches">
        <header class="dock-head"><h2>Couches</h2><button aria-label="Détacher"><svg><use href="#float"/></svg></button><button aria-label="Fermer le panneau"><svg><use href="#close"/></svg></button></header>
        <div class="dock-tools">
          <button aria-label="Style de couche"><svg viewBox="0 0 32 32"><path d="M5 8l8-3 7 12-5 9-8-4z" fill="#fbe04c"/><path d="M3 19l8-3 4 13-9-2z" fill="#e2403a"/><path d="M3 13l6-1 3 7-7 2z" fill="#9db8dc"/><path d="M12 17l8-5 6 7-9 11-5-3z" fill="#e2a752" stroke="#9c6a22"/><path d="M22 15l8-11" stroke="#e2953c" stroke-width="4"/></svg></button>
          <button aria-label="Ajouter un groupe"><svg viewBox="0 0 32 32"><path d="M2 12v18h16M7 8v17h14V8zM12 4h13v16" fill="none" stroke="#777" stroke-width="2"/><path d="M14 20V5q2-6 5 0v14" fill="none" stroke="#3c5e8a" stroke-width="2"/><rect x="20" y="21" width="11" height="11" rx="2" fill="#4b8f4f"/><path d="M25.500 23v7M22 26.500h7" stroke="#fff" stroke-width="2"/></svg></button>
          <button aria-label="Visibilité"><svg viewBox="0 0 32 32"><path d="M1 17q14-16 28 0-14 13-28 0z" fill="#fff" stroke="#777" stroke-width="2"/><path d="M2 10q13-10 26-1" fill="none" stroke="#777" stroke-width="2"/><circle cx="15" cy="16" r="7" fill="#6f9bcb" stroke="#2c5484"/><circle cx="15" cy="16" r="3" fill="#111"/><path d="M23 26h10l-5 6z" fill="#555"/></svg></button>
          <button aria-label="Filtrer la légende"><svg viewBox="0 0 32 32"><use href="#funnel"/><path d="M23 26h10l-5 6z" fill="#555"/></svg></button>
          <button class="off" aria-label="Filtrer par expression"><svg viewBox="0 0 32 32"><path d="M15 3q-10-4-10 3 0 5 7 4-9 0-9 5 0 7 12 3" fill="none" stroke="#555" stroke-width="3"/><path d="M17 17h14M18 17v13M29 17v13M24 17v5" fill="none" stroke="#777" stroke-width="3"/></svg></button><button class="drop small" aria-label="Options de filtre"><svg><use href="#down"/></svg></button>
          <button aria-label="Tout déplier"><svg viewBox="0 0 32 32"><use href="#tree"/><path d="M22 30l9-11h-5V2h-7v17h-5z" fill="#5d8fca" stroke="#2c5484" stroke-width="1.500"/></svg></button>
          <button aria-label="Tout replier"><svg viewBox="0 0 32 32"><use href="#tree"/><path d="M22 1l9 11h-5v17h-7V12h-5z" fill="#5d8fca" stroke="#2c5484" stroke-width="1.500"/></svg></button>
          <button aria-label="Supprimer la couche"><svg viewBox="0 0 32 32"><path d="M3 3h22v23H3z" fill="#f2f2f2" stroke="#888" stroke-width="2"/><rect x="19" y="20" width="12" height="11" rx="3" fill="#dc3c48"/><path d="M22 25.500h6" stroke="#fff" stroke-width="2.500"/></svg></button>
        </div>
        <div class="layer-list">
          <div class="layer"><input type="checkbox" id="lay" checked><span class="swatch"></span><label for="lay">mdg_admbnda_adm2_BNGRC_OCHA_20181031</label></div>
        </div>
      </section>
    </div>
    <div class="vsplit"></div>
    <div class="canvas">
      <svg viewBox="920 290 1372 1414" role="img" aria-label="Districts de Madagascar">
        <g class="land" transform="translate(1260 700) scale(.33333)"><path class="fill" d="M660 135L760 75 1330 440 1290 540 1165 1040 1115 1200 165 1200 218 1100z"/>
          <path d="M660 135L640 145 628 160 620 175 628 185 620 195 632 210 628 222 612 225 610 200 605 182 580 183 545 195 515 202 500 210 485 200 465 210 460 225 462 240 455 250 448 237 410 242 412 255 397 270 390 250 388 235 380 233 350 260 305 290 212 287 203 310 213 355 205 372 208 400 178 440 165 460 140 490 130 520 110 545 103 570 103 600 120 630 117 680 125 720 125 760 148 795 165 830 170 880 165 905 180 935 210 975 213 1000 203 1030 205 1070 198 1075 218 1100"/>
          <path d="M1290 540L1300 570 1310 610 1295 670 1285 720 1270 780 1235 860 1200 940 1170 1030 1165 1040"/></g>
        <g class="land" transform="translate(1220 1040) scale(.33333)"><path d="M340 80L310 140 280 185 258 200 240 245 215 275 205 310 190 360 165 372 135 375 120 380 118 440 95 470 85 505 72 525 75 570 68 580 78 620 92 710 145 755 155 810 182 850 180 870 158 880 162 1010 165 1045 215 1095 220 1125 240 1155 245 1190 280 1200 310 1235 340 1238 400 1250 440 1275 480 1295 482 1308 570 1302 600 1288 625 1268 725 1222 780 1215 820 1218 880 1190 910 1170 915 1140 945 1075 955 1030 973 990 1015 915 1025 855 1045 795 1060 720 1078 630 1090 595 1145 465 1180 345 1203 275 1230 185 1280 75 1285 20"/></g>
        <g class="land" transform="translate(1480 470) scale(.33333)"><path d="M0 825L30 803 60 782 82 768 97 763 103 770 100 780 105 788 112 787 118 797 113 803 100 812 98 822 108 826 118 822 126 810 133 812 140 805 134 795 136 785 120 778 116 758 126 745 140 738 150 730 155 715 170 708 187 697 188 690 176 694 170 688 180 672 196 655 206 650 214 658 210 672 213 690 200 705 193 718 193 738 203 744 214 735 215 722 225 718 235 700 250 665 267 638 262 615 258 600 260 580 272 560 275 552 283 558 300 552 308 556 308 540 302 530 312 525 318 545 315 570 320 585 323 560 328 545 325 525 325 515 310 510 325 500 310 492 300 484 295 475 297 458 293 455 299 440 305 435 298 430 300 415 315 408 322 400 330 410 340 402 345 415 355 425 360 445 370 458 385 460 392 445 393 425 400 415 395 405 410 402 425 405 440 400 430 390 428 375 424 365 427 352 433 370 445 380 470 382 490 372 498 355 493 348 507 343 498 340 497 320 503 300 515 285 522 270 527 258 522 240 516 222 518 208 510 205 513 188 500 187 490 168 480 157 500 155 513 175 523 174 530 160 530 148 545 133 560 125 572 124 575 108 578 98 560 90 580 88 575 80 585 72 590 60 597 60 605 70 610 85 622 105 600 105 588 108 585 120 583 130 595 138 606 132 608 125 614 142 620 125 626 122 630 145 645 147 650 158 660 155 660 180 658 205 675 212 685 235 695 235 707 237 710 258 725 268 735 290 742 300 742 325 752 350 760 370 762 390 775 425 785 460 787 490 790 520 792 550 800 570 797 600 796 625 805 665 825 710 855 755 860 785 850 825 830 875 805 930 795 930 775 918 765 910 768 895 760 880 748 880 758 870 750 850 740 845 735 830 732 815 710 812 685 822 675 840 680 860 682 890 692 915 686 940 693 965 712 968 726 980 718 1010 722 1040 712 1068 698 1085 705 1105 715 1118 670 1130 655 1165 635 1205 630 1230"/>
          <path d="M355 352L370 345 375 330 385 328 388 345 398 370 385 375 370 372 360 358zM755 1088L760 1098 740 1140 714 1178 720 1155 735 1120zM392 382l6-6 5 8-6 6zM229 621l6-6 6 6-6 6z"/></g>
        <g class="lines" transform="translate(1480 470) scale(.33333)"><path d="M527 260L555 252 575 258 585 278 605 292 640 285 650 262 670 242 685 238M640 285L630 305 637 322 630 335 632 350 625 365 612 372 618 390 615 400 622 410 622 435 628 445 620 460 620 480 612 492 590 500 578 525 568 547M612 492L625 488 640 492 655 486 670 488 690 485 695 498 700 488 715 500 715 510 730 515 750 535 760 525 762 500 770 490 758 480 760 466 785 465M568 547L590 547 610 545 630 533 660 530 665 550 680 560 692 575 692 595 685 605 710 617 720 640 735 637 745 625 760 617 780 622 795 627M720 640L730 660 725 690 712 730 697 738 680 728 660 700 642 680 635 665 630 640 610 628 628 612 600 598 590 580 570 565 562 545 535 535 505 555 495 558 485 550 465 550 440 547 425 543 407 540 405 525 392 520 388 480 375 475 355 480 335 495 325 515M535 535L535 480 510 460 480 435 450 425 452 412 470 408 472 395 465 385M422 543L410 560 417 575 412 600 397 602 397 650 400 660 420 672 424 690 410 690 405 682 390 685 388 700 395 715 378 735 378 750 368 765 365 800M397 632L380 635 372 615 345 612 325 620 320 640 325 655 322 670 295 677 280 673 280 700 275 725 270 740 265 755 255 800 275 805M424 690L440 697 462 697 465 680 475 678 490 685 515 712 535 702 555 700 562 675 590 662 597 648 605 660 632 662M635 670L642 690 635 710 638 735 620 740 618 768 580 785 542 797 545 818M140 812L180 810 220 815 240 810 265 815 280 805 295 800 320 800 335 812 350 802 370 800M335 812L345 838 380 842 415 855 440 857 450 832 462 828 480 810 510 815 525 825 545 820 562 820 555 860 553 880 565 915 580 925M712 730L715 752 740 775 760 775 755 790 765 810 762 840 750 862M575 922L610 912 645 908 660 915 692 915M572 925L575 945 585 965 583 1000 605 1035 625 1048 660 1055 712 1070M583 1000L575 1020 555 1045 542 1050 532 1065 525 1083 455 1080 460 1065 450 1040 430 1015 405 1008 385 992 366 990M375 845L383 870 395 890 380 895 375 910 365 915 372 950 385 970 383 990"/>
          <path class="dots" d="M474 152h2M468 166h2M549 94h3M537 122h6M468 230h4M448 250l2 20M455 255l0 12M282 412h2M270 490h4M276 504l6 6M266 527h3M280 538h5M243 579h3M703 826h4M655 150l-2 20 8 30M665 195l4 12M706 232l0 14M720 240v20M590 120l12 14M586 134l18-12M355 350h8M318 402h6M335 405h6M410 405h14M755 880l8 14M720 1160l14-30M570 88h12M618 98l4 10M318 530l2 50M680 215v20M314 520l8 30M360 340v14"/></g>
        <g class="lines" transform="translate(1260 700) scale(.33333)"><path d="M308 290L315 330 320 355 345 370 365 380 390 395 390 405 425 435 435 450 435 480 442 500 448 530 458 545M458 250L460 295 475 315 490 330 520 350 528 368 520 375 505 388 490 395 485 450 475 480 465 492 470 520 458 548 435 545 433 572 415 575 370 573 345 570 325 565 300 568 250 575 240 590 250 608 232 605 215 608 220 650 230 690 230 730 240 745 255 750M180 440L200 465 220 480 235 500 252 505 262 525 280 530 285 545 300 560 300 568M370 573L365 582 345 580 365 595 388 625 390 645 420 665 430 685 450 700 453 725 440 740 438 755M458 548L485 562 525 558 537 580 535 600 540 655M485 455L520 460 550 460 570 447 575 460 585 490 605 485 612 520 622 540 645 560 645 600 650 628M540 658L585 665 600 650 625 642 650 628M612 520L635 515 645 490 650 465 675 457 680 440 690 420 697 380 740 385 765 368 800 372 820 378 835 392 830 430 833 458 815 465 785 492 810 520 825 565 845 600 847 628M650 628L690 625 718 620 725 640 775 650 800 635 845 628M612 230L592 265 580 290 578 320 565 345 562 365M528 368L565 367 600 373 615 355 632 337 625 320 660 315 720 320 770 308 805 300 818 280M612 225L635 240 665 222 690 225 720 235 735 228 760 225 800 218M793 122L790 160 795 175 793 190 800 210 812 240 815 275 840 300 840 320 815 340 803 355 815 368 835 378M807 245L835 243 855 228 880 222 895 218 900 198 915 210 945 235 990 250 1010 270 1040 298M840 318L855 318 858 332 845 330 865 340 905 335 930 355 965 372M920 318L945 345 965 372 970 410 990 440 1000 470 1020 475 1045 470 1055 485 1070 490 1100 512 1135 502 1150 500 1160 480 1165 440 1172 410 1185 394M920 318L945 332 965 320 975 300 1025 303M1165 440L1200 440 1230 445 1260 460 1280 458 1308 475M1160 480L1178 490 1178 510 1215 508 1225 525 1245 545 1265 545 1262 585 1280 592 1303 590M1178 515L1162 525 1160 550 1110 548 1095 565 1085 590 1070 610 1030 630 1010 660 995 650 970 650M1160 550L1160 570 1152 590 1135 600 1160 605 1165 628 1200 628 1230 620 1258 612 1262 585M1165 628L1160 655 1128 658 1135 690 1155 715 1190 720 1205 745 1210 760 1225 775 1262 782M1155 715L1145 725 1100 735 1088 755 1092 800 1105 820 1105 850 1120 860 1118 890 1135 928 1150 925 1155 905 1170 912 1185 905 1200 935M1020 475L1020 510 1000 545 970 570 975 585 992 605 975 620 980 640 970 650M845 628L855 650 870 662 905 660 915 632 955 628 962 650 970 652M962 650L980 690 988 745 975 810M988 745L1015 742 1018 718 1050 705 1052 750 1088 755M875 662L868 680 872 705 860 725 865 750 855 775 845 795 825 815 815 838 785 835 770 815 760 800 725 775 700 745 690 725 685 700 655 628M255 750L290 755 310 738 335 720 350 735 370 725 400 735 440 755 460 762 460 800 437 835 447 870 447 895 458 905 450 955 480 965 500 960 503 945 508 990M453 712L470 700 520 682 540 660M520 682L500 720 490 748 515 772 550 785 570 782 590 788 597 778 625 788 632 810 660 822 700 825 735 838 750 832 785 835M150 795L180 800 210 785 215 770 255 750M290 755L305 790 325 830 330 855 325 880 340 905 340 930 365 948M180 935L250 932 280 945 298 965 320 958 370 948 385 985 385 1030 390 1065 398 1100 385 1110 375 1148M218 1100L280 1120 295 1135 310 1138 330 1135 350 1145 375 1148 385 1132 405 1135 420 1150 455 1145 470 1150 505 1160M508 990L505 1020 510 1050 498 1095 505 1160M508 992L550 990 585 988 620 980 675 985 692 1008 680 1025 682 1050 660 1052 645 1060 640 1085 648 1110 600 1120 580 1120 560 1105 498 1092M585 988L610 965 620 945 640 920 670 912 665 900 700 902 715 905 740 925 748 940 725 948 705 965 680 985M660 822L670 850 655 890 670 905M748 940L775 940 780 965 815 980 805 998M785 835L790 855 780 900 788 930 775 942M785 838L835 850 840 868 855 878 880 865 890 835 905 825 895 795 905 785M855 775L880 782 905 785 915 785 935 790 945 815 970 815 965 850 970 880 965 935M855 878L860 920 865 955 825 960 815 980M890 835L910 838 912 860 908 885 920 925 885 925 865 915M895 905L905 925M875 925L885 970 915 990 950 1015M905 930L965 935 968 965 955 980 948 1050M970 960L1010 942 1050 940 1065 965 1090 970 1110 960 1105 930 1135 928M1065 965L1060 985 1070 1010 1050 1020 1055 1045 1050 1070M1100 968L1120 1000 1115 1045 1165 1040M1120 1045L1075 1055 1055 1075 1020 1070 995 1055 985 1065 955 1062M690 1010L730 1020 765 1035 780 1005 805 995 808 1060 850 1070 865 1090 865 1125M815 985L860 995 890 1015 882 1022 895 1040 950 1050 958 1080 930 1085 920 1110 920 1125M765 1035L755 1065 750 1090 755 1150"/><circle cx="771" cy="1087" r="12"/><path class="blob" d="M870 865l12-2 8 18-8 6-10-8z"/><path class="dots" d="M99 769h3M100 805h3M203 1022v30M620 178l10 4M614 212l16 2M1283 705l4 14M883 885l16 20"/></g>
        <g class="lines" transform="translate(1220 1040) scale(.33333)"><path d="M410 115L385 122 365 140 362 165 356 190 362 210 355 230 385 250 388 275 382 300 355 318 352 335 365 350 395 355 430 360 445 373 475 373 485 358 505 345 530 342 560 310 590 305 600 292 618 292M625 140L625 160 632 180 630 200 632 245 620 290 620 310 615 360 580 378 570 405 568 450M207 308L230 308 255 295 310 300 325 320 352 335M395 355L382 380 388 400 385 420 397 468M135 375L160 410 180 435 182 450 210 498 240 505 260 488 290 492 330 490 365 475 437 465 440 495 435 530 460 530 480 540 510 545M290 492L297 515 285 530 275 590 258 605 258 620M568 450L535 465 522 505 497 510 505 525 510 575 490 620 465 645M78 622L105 610 150 608 160 600 175 615 200 620 255 622 265 640 290 632 310 640 330 632 345 642 365 632 380 640 395 625 425 630 455 628 465 645 460 700 465 720 450 745M203 620L195 640 205 680 165 695 165 730 190 728 225 717 255 732 275 765 305 770 298 793 340 795 360 790 375 795 385 778 410 772 430 750 450 745 485 757 527 768M298 793L270 800 272 825 262 845 265 865 245 870 225 895 222 925 260 930 272 945 248 965 235 1000M380 790L398 800 400 830 420 850 428 887 475 885 480 905 462 920 470 940 490 940M162 1010L225 1008 270 995 300 970 340 962 360 965 385 950 400 955 465 952M527 768L530 740 540 712 580 695 605 688 635 678 665 678 690 700 715 712 735 745 765 780 770 820 758 840 775 860 775 880 760 900 755 922M527 768L522 810 497 840 525 840 548 860 545 912 510 915 495 925 487 940 485 990 465 1030 465 1065 470 1085 460 1125 435 1155 390 1185 345 1220 342 1238M545 912L555 930 557 960 585 960 605 950 612 975 632 990 635 975 660 962 700 945 720 930 755 922 775 935 800 950 825 965 830 985 858 990 862 1040 850 1065 825 1090 820 1105 790 1115 785 1160 788 1185 778 1215M470 1085L490 1105 530 1125 545 1120 548 1100 575 1065 600 1055 615 1030 620 1005M530 1125L530 1145 520 1160 525 1195 545 1205 580 1200 600 1235 628 1240 628 1265M530 1205L512 1210 512 1225 525 1240 500 1260 485 1285 480 1300M620 990L632 1005 650 1025 665 1065 655 1075 660 1110 675 1140 700 1165 727 1185 727 1220M735 740L745 715 765 718 775 680 800 670 825 680 850 690 868 725 840 732 840 755 855 780 860 830 852 875M568 445L600 455 625 470 660 465 705 472 745 485 765 520 765 545 785 555 790 600 820 625 820 645 800 658 800 670M868 725L885 740 900 738 912 742M775 878L825 885 855 875 860 900 875 912 918 905M895 565L920 590 925 605 920 635 932 660 922 690 930 720 912 742 905 770 910 795 935 795 940 775 980 758M920 795L918 830 925 850 918 905 920 930 932 937 915 940 912 960 890 985 890 1015 880 1025 862 1022M915 960L940 965 973 990M785 555L815 560 840 570 860 565 895 565 915 545 940 540 950 522 940 500 965 485 970 440 920 430 885 425 825 430 825 452M705 472L725 435 750 412 760 430 785 430 825 452 870 465 905 490 940 500M905 560L950 580 970 595 975 582 1025 582 1060 578 1090 590M975 585L980 605 1010 620 1035 632 1078 630M1008 622L1000 655 985 665 992 710 980 755 1015 780 1045 793M618 315L660 305 690 310 720 305 730 265 745 252 770 258 790 247 810 275 840 300 855 310M725 98L725 135 760 145 785 152 820 148 850 152 870 135 885 130 920 128 920 112 950 105 990 108 1035 108 1045 80 1040 60 1075 42M925 130L935 185 965 205 1000 200 1005 185 1030 190 1035 108M1030 185L1060 190 1090 180 1118 188 1120 165 1140 140 1150 95 1170 85 1175 55M1140 140L1160 158 1185 160 1195 175 1230 185M885 135L888 165 880 200 880 235 855 255 870 285 865 310M885 200L910 215 915 270 950 268 958 300 980 305 990 280 1000 255 1025 250 1018 235 1030 225 1030 200 1050 210 1060 235 1075 245 1078 272 1050 285 1062 320 1055 370 1060 400 1055 440 1020 448 1015 410 975 395M1078 272L1095 258 1130 265 1165 272 1203 275M930 272L920 290 895 292 865 315 880 335 890 355 905 365 940 362 970 362 980 335 965 320 960 300M855 310L820 308 825 335 855 350 858 375 842 380 840 425M905 370L912 395 900 415 885 425M970 362L975 395 970 435M1020 448L1032 480 1025 510 1028 580M1055 440L1085 450 1110 462 1120 448 1145 465"/><circle cx="905" cy="407" r="8"/><path class="dots" d="M57 540v14M62 517v3M80 490v16M68 570v10M155 812l8 10M462 940v18M850 308l18 4M860 320h10M1022 190v50M898 385h14"/></g>
      </svg>
    </div>
  </main>

  <footer class="status">
    <label class="field search"><svg viewBox="0 0 28 28"><circle cx="11" cy="11" r="8.500" fill="none" stroke="#888" stroke-width="2"/><path d="M17 17l8 9" stroke="#888" stroke-width="3"/></svg><input type="text" placeholder="Taper pour trouver (⌘K)" aria-label="Taper pour trouver"></label>
    <span class="msg">1 e</span>
    <label class="clip" for="coord"><span>Coordonnée</span></label>
    <input class="field coord" id="coord" type="text" value="-21,66° 35,16°">
    <button class="icon mouse" aria-label="Suivi de la souris"><svg viewBox="0 0 30 30"><path d="M4 3q6-4 9 2l7 13q3 8-4 10-5 1-8-5z" fill="#fff" stroke="#111" stroke-width="2.500"/><path d="M7 5l8 12M12 4l6 12M4 8l7 12" stroke="#111" stroke-width="2"/><circle cx="19" cy="22" r="7" fill="#eee" stroke="#111" stroke-width="2.500"/><circle cx="20" cy="22" r="2.500" fill="#111"/><path d="M22 2v3M27 4l-3 3M23 10l4 1M1 18h3" stroke="#111" stroke-width="2"/></svg></button>
    <label for="scale" class="scale-label">Échelle</label>
    <span class="combo"><select class="field" id="scale"><option>1:13694751</option></select></span>
    <button class="icon lock" aria-label="Verrouiller l'échelle"><svg viewBox="0 0 26 32"><path d="M6 15V9q0-7 7-7t7 7v6" fill="none" stroke="#888" stroke-width="3"/><rect x="1" y="14" width="24" height="17" rx="3" fill="#606060"/></svg></button>
    <label for="mag-in" class="loupe">Loupe</label>
    <span class="field spin"><input id="mag-in" type="text" value="100%"><span class="steps"><button aria-label="Augmenter la loupe"><svg viewBox="0 0 16 12"><path d="M1 11h14L8 1z" fill="#555"/></svg></button><button aria-label="Réduire la loupe"><svg><use href="#down"/></svg></button></span></span>
    <label for="rot" class="rot">Rotation</label>
    <span class="field spin"><input id="rot" type="text" value="0,0 °"><span class="steps"><button aria-label="Augmenter la rotation"><svg viewBox="0 0 16 12"><path d="M1 11h14L8 1z" fill="#555"/></svg></button><button aria-label="Réduire la rotation"><svg><use href="#down"/></svg></button></span></span>
    <input type="checkbox" id="render" checked><label for="render" class="rend">Rendu</label>
    <button class="crs"><svg viewBox="0 0 30 30"><circle cx="15" cy="15" r="12" fill="#e4e4e4" stroke="#666" stroke-width="2"/><path d="M1 12l7-8h14l7 8-4 3H5zM2 11h26M9 4l-2 11 8 13 8-13-2-11M15 3v25M5 20h20" fill="none" stroke="#666" stroke-width="2"/></svg>EPSG:4326</button>
    <button class="icon bubble" aria-label="Messages"><svg viewBox="0 0 34 32"><path d="M17 1C7 1 1 6 1 13.500S8 26 17 26l4 0q3 5 8 5l-3-7c4-2 7-6 7-10.500C33 6 26 1 17 1z" fill="#666"/></svg></button>
    <i class="resize"></i>
  </footer>
</div>
</body>
</html>
```
FILE: styles.css
```css
* { box-sizing: border-box; }
body { margin: 0; height: 100vh; padding-bottom: 2px; background: linear-gradient(#0d2a1c 50%, #949c94 50%); font: 26px/36px Inter, "Liberation Sans", sans-serif; color: #222; overflow: hidden; }
button { border: 0; padding: 0; background: none; font: inherit; color: inherit; display: flex; align-items: center; justify-content: center; flex: none; }
h1, h2 { margin: 0; }
svg { display: block; }
.defs { position: absolute; width: 0; height: 0; }

.window { height: 100%; display: flex; flex-direction: column; background: #ebebeb; border-radius: 18px; overflow: hidden; }

.titlebar { height: 55px; flex: none; display: grid; grid-template-columns: 1fr auto 1fr; align-items: center; padding: 0 16px 2px; background: #f1f2f8; border-bottom: 2px solid #d2d3d6; }
.titlebar h1 { font-size: 26px; line-height: 32px; font-weight: 700; color: #434448; }
.lights { display: flex; gap: 16px; }
.light { width: 24px; height: 24px; border-radius: 50%; }
.red { background: #ec6a5f; }
.amber { background: #f4bf50; }
.green { background: #61c555; }

.toolbar { height: 77px; flex: none; display: flex; align-items: center; padding-left: 10px; background: linear-gradient(#f6f6f6, #e9e9e9); border-bottom: 2px solid #adadad; overflow: hidden; }
.group { display: flex; align-items: center; flex: none; }
.group + .group { padding-left: 18px; }
.group + .group.tight { padding-left: 10px; }
.group > button { width: 62px; height: 62px; margin-left: 4px; position: relative; }
.group > .grip + button { margin-left: 9px; }
.group > button svg { width: 48px; height: 48px; overflow: visible; }
.grip { width: 8px; height: 52px; background: radial-gradient(circle at 2px 2px, #b5b5b5 1px, transparent 2px) 0 0 / 6px 8px; }
.group > button.on { background: #d6d6d6; border: 2px solid #a8a8a8; border-radius: 5px; }
.off svg { opacity: .34; filter: grayscale(.7); }
.corner { position: absolute; right: 0; bottom: 6px; width: 12px; height: 7px; background: #555; clip-path: polygon(0 0, 100% 0, 50% 100%); }
.group > button.drop { width: 25px; margin-left: 0; }
.group > button.drop svg, .drop.small svg { width: 16px; height: 12px; }
.chev { width: 28px; }
.group > button.chev { width: 28px; margin-left: 8px; }
.group > button.chev svg, .chev svg { width: 18px; height: 18px; }
.end { margin-left: auto; }
.sep { width: 2px; height: 40px; margin: 0 4px 0 8px; background: #ccc; border-right: 1px solid #fff; }
.glyph { font: 26px "Noto Sans", sans-serif; fill: #444; }
.ratio { font: bold 16px Inter, sans-serif; fill: #555; }
.tag { font: 600 16px Inter, sans-serif; fill: #222; }
.red-tag { fill: #c40a14; }
.help { font: 30px "Liberation Serif", serif; fill: #fff; }

.work { flex: 1; min-height: 0; display: flex; padding-top: 2px; }
.side { width: 905px; flex: none; display: flex; flex-direction: column; }
.dock { display: flex; flex-direction: column; min-height: 0; }
.explorer { flex: 0 0 727px; }
.layers { flex: 1; }
.dock-head { height: 38px; flex: none; display: flex; align-items: center; gap: 6px; padding: 0 3px 0 8px; }
.dock-head h2 { flex: 1; font-size: 22px; line-height: 28px; font-weight: 400; }
.dock-head svg { width: 22px; height: 22px; }
.dock-tools { height: 62px; flex: none; display: flex; align-items: center; gap: 18px; padding: 0 16px 2px; }
.dock-tools svg { width: 32px; height: 32px; overflow: visible; }
.drop.small { margin: 0 -2px 0 -7px; }
.tree-frame { flex: 1; min-height: 0; display: flex; background: #fff; border: 1px solid #b5b5b5; border-width: 2px 1px 1px; }
.tree { flex: 1; margin: 0; padding: 0; list-style: none; overflow: hidden; }
.tree li { height: 36px; display: flex; align-items: center; gap: 13px; padding-left: 9px; white-space: nowrap; }
.tree li::before { content: ""; width: 16px; flex: none; }
.tree li svg { width: 32px; height: 32px; flex: none; }
.tree .shut::before { height: 16px; background: #555; clip-path: polygon(25% 0, 80% 50%, 25% 100%); }
.tree .open::before { height: 9px; background: #555; clip-path: polygon(0 0, 100% 0, 50% 100%); }
.tree .child { padding-left: 41px; }
.scroll { width: 28px; flex: none; display: flex; flex-direction: column; border-left: 1px solid #b5b5b5; background: #f4f4f4; }
.scroll button { height: 26px; }
.scroll svg { width: 16px; height: 12px; }
.track { flex: 1; background: #dedede; border: solid #b5b5b5; border-width: 1px 0; }
.thumb { height: 77%; background: linear-gradient(90deg, #f2f2f2, #fff); border-bottom: 1px solid #b5b5b5; }
.splitter { height: 14px; flex: none; background: radial-gradient(circle, #aaa 1px, transparent 2px) center / 6px 10px repeat-x; clip-path: inset(0 432px 0 440px); }
.vsplit { width: 13px; flex: none; background: radial-gradient(circle, #aaa 1px, transparent 2px) center / 10px 6px repeat-y; clip-path: inset(696px 0 688px 0); }
.layer-list { flex: 1; background: #fff; border: 1px solid #b5b5b5; border-top-width: 2px; }
.layer { display: flex; align-items: center; padding-left: 47px; }
.swatch { width: 32px; height: 32px; margin: 0 7px 0 12px; background: #efefef; border: 1px solid #ababab; }
.layer label { flex: 1; padding-left: 3px; font-size: 27px; line-height: 32px; font-weight: 700; text-decoration: underline; text-decoration-thickness: 3px; text-underline-offset: 5px; background: linear-gradient(#f7faff, #e4f0fc); border: 2px solid #c4d5ee; border-radius: 3px; color: #26313e; }
input[type="checkbox"] { appearance: none; flex: none; width: 28px; height: 28px; margin: 0; border: 2px solid #a5a5a5; background: #fff; display: grid; place-items: center; }
input[type="checkbox"]:checked::before { content: ""; width: 18px; height: 20px; background: #222; clip-path: polygon(0 52%, 16% 44%, 36% 72%, 84% 0, 100% 0, 42% 100%, 30% 100%); }

.canvas { flex: 1; min-width: 0; background: #fff; border: 1px solid #b5b5b5; border-right: 0; }
.canvas svg { width: 100%; height: 100%; }
.land path, .lines path, .lines circle { stroke: #222; stroke-width: 5; stroke-linejoin: round; }
.land path { fill: #eee; }
.land .fill { stroke: none; }
.lines path, .lines circle { fill: none; }
.lines .dots { stroke-width: 6; stroke-linecap: round; }
.lines .blob { fill: #222; }

.status { height: 60px; flex: none; position: relative; display: flex; align-items: center; padding: 1px 57px 0 9px; font-size: 22px; line-height: 30px; color: #111; white-space: nowrap; background: #ebebeb; }
.status > * { flex: none; }
.status input, .status select { font: inherit; color: inherit; outline: 0; }
.field { height: 46px; background: #fff; border: 2px solid #a5a5a5; border-radius: 5px; }
.status .search { flex: 1 1 0; min-width: 0; height: 48px; display: flex; align-items: center; gap: 13px; padding-left: 14px; }
.search svg { width: 28px; height: 28px; flex: none; }
.status .search input { flex: 1; min-width: 0; border: 0; padding: 0; font-size: 25px; }
.search input::placeholder { color: #808080; opacity: 1; }
.msg { width: 42px; margin-left: 16px; }
.clip { display: flex; justify-content: center; overflow: hidden; width: 122px; margin-right: 7px; }
.loupe { width: 62px; margin: 0 3px 0 16px; }
.status .coord { width: 186px; padding: 0; text-align: center; font-size: 24px; }
.icon svg { width: 32px; height: 32px; }
.mouse { width: 32px; margin: 0 24px 0 8px; }
.scale-label { width: 78px; }
.combo { position: relative; width: 186px; }
.status .combo select { appearance: none; width: 100%; padding: 0 0 0 6px; display: block; font-size: 23px; }
.combo::after { content: ""; position: absolute; right: 2px; top: 2px; bottom: 2px; width: 40px; pointer-events: none; border-left: 1px solid #b5b5b5; background: linear-gradient(#fafafa, #eee); border-radius: 0 3px 3px 0; }
.combo::before { content: ""; position: absolute; z-index: 1; right: 14px; top: 18px; width: 16px; height: 11px; background: #555; clip-path: polygon(0 0, 100% 0, 50% 100%); pointer-events: none; }
.lock { width: 26px; margin-left: 24px; }
.spin { width: 184px; display: flex; overflow: hidden; }
.status .spin input { flex: 1; min-width: 0; border: 0; padding: 0 0 0 8px; font-size: 23px; }
.steps { width: 28px; display: flex; flex-direction: column; border-left: 1px solid #b5b5b5; background: #f8f8f8; }
.steps button { flex: 1; }
.steps svg { width: 16px; height: 12px; }
.rot { width: 86px; margin: 0 18px 0 16px; }
#render { margin: 0 11px 0 14px; }
.rend { width: 66px; }
.crs { gap: 4px; margin-left: 32px; width: 156px; }
.crs svg { width: 30px; height: 30px; flex: none; }
.bubble { width: 34px; margin-left: 47px; }
.resize { position: absolute; right: 0; bottom: 2px; width: 24px; height: 24px; background: radial-gradient(circle at 2px 2px, #aaa 1px, transparent 2px) 0 0 / 6px 6px; clip-path: polygon(100% 0, 100% 100%, 0 100%); }
```
